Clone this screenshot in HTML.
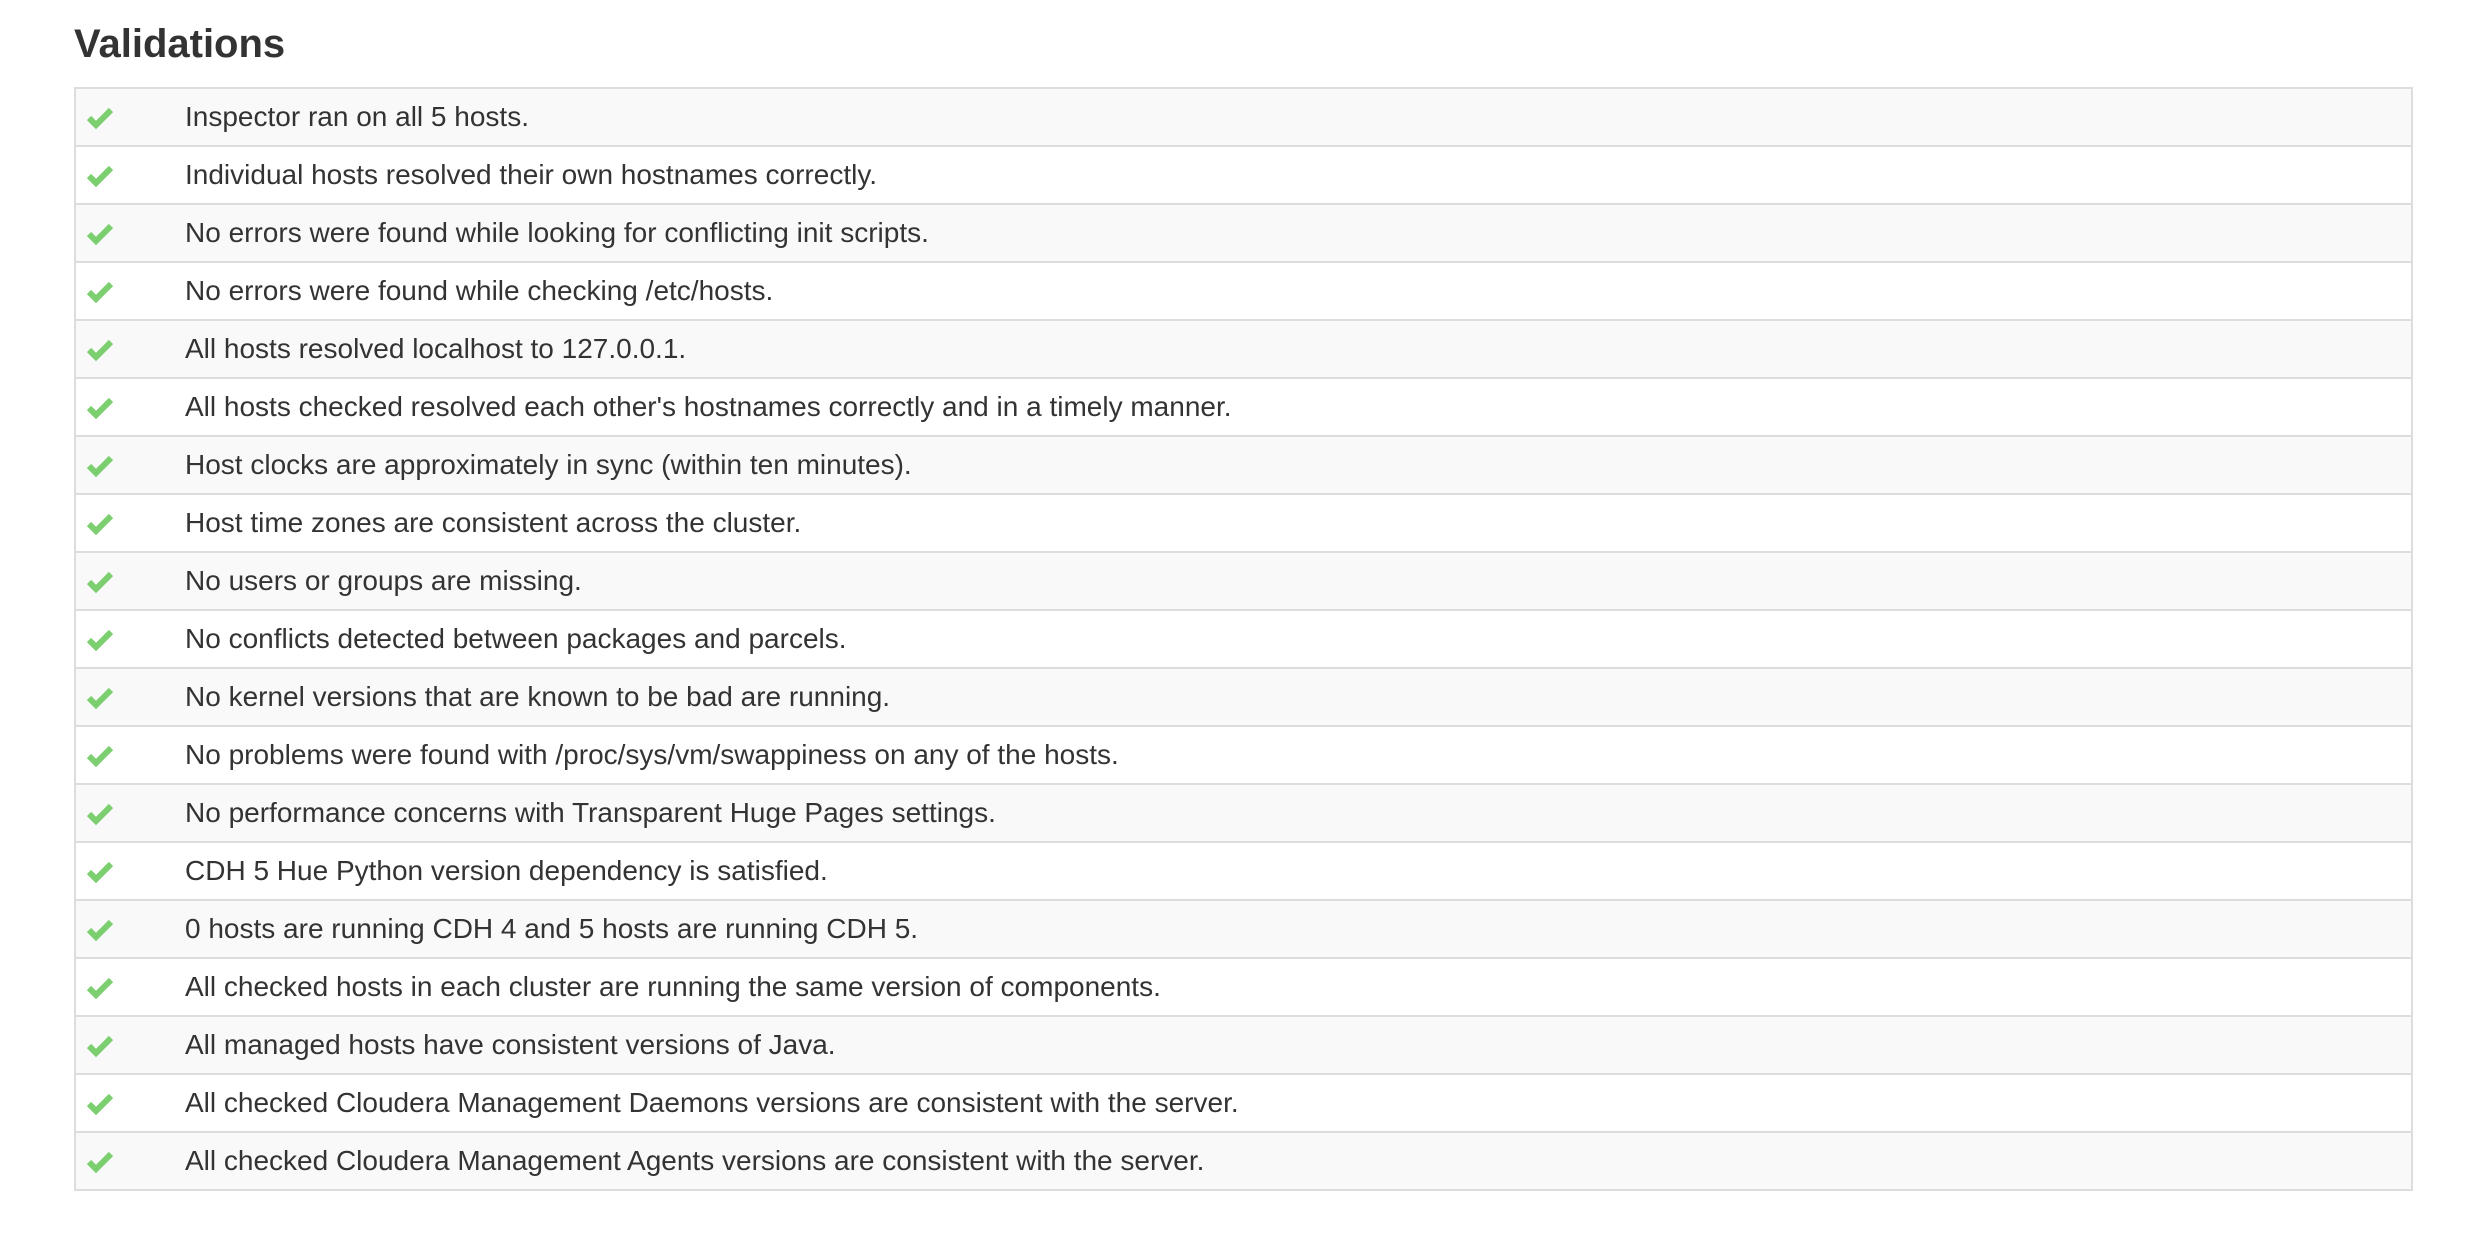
<!DOCTYPE html>
<html><head><style>
body{margin:0;background:#fff;font-family:"Liberation Sans",sans-serif;color:#333;}
h2{position:absolute;left:74px;top:14px;margin:0;font-size:40px;font-weight:bold;line-height:60px;}
table{position:absolute;left:74px;top:87px;width:2339px;border-collapse:collapse;border:2px solid #ddd;}
td{height:56px;border-top:2px solid #ddd;padding:0;font-size:28px;vertical-align:middle;}
tr:nth-child(odd) td{background:#f9f9f9;}
td.i{width:99px;padding-left:10px;}
td.i svg{display:block}
</style></head><body>
<h2>Validations</h2>
<table>
<tr><td class="i"><svg width="28" height="24" viewBox="0 0 28 24"><path d="M3 13 L10 20 L25 5" fill="none" stroke="#7bcf6f" stroke-width="6"/></svg></td><td>Inspector ran on all 5 hosts.</td></tr>
<tr><td class="i"><svg width="28" height="24" viewBox="0 0 28 24"><path d="M3 13 L10 20 L25 5" fill="none" stroke="#7bcf6f" stroke-width="6"/></svg></td><td>Individual hosts resolved their own hostnames correctly.</td></tr>
<tr><td class="i"><svg width="28" height="24" viewBox="0 0 28 24"><path d="M3 13 L10 20 L25 5" fill="none" stroke="#7bcf6f" stroke-width="6"/></svg></td><td>No errors were found while looking for conflicting init scripts.</td></tr>
<tr><td class="i"><svg width="28" height="24" viewBox="0 0 28 24"><path d="M3 13 L10 20 L25 5" fill="none" stroke="#7bcf6f" stroke-width="6"/></svg></td><td>No errors were found while checking /etc/hosts.</td></tr>
<tr><td class="i"><svg width="28" height="24" viewBox="0 0 28 24"><path d="M3 13 L10 20 L25 5" fill="none" stroke="#7bcf6f" stroke-width="6"/></svg></td><td>All hosts resolved localhost to 127.0.0.1.</td></tr>
<tr><td class="i"><svg width="28" height="24" viewBox="0 0 28 24"><path d="M3 13 L10 20 L25 5" fill="none" stroke="#7bcf6f" stroke-width="6"/></svg></td><td>All hosts checked resolved each other's hostnames correctly and in a timely manner.</td></tr>
<tr><td class="i"><svg width="28" height="24" viewBox="0 0 28 24"><path d="M3 13 L10 20 L25 5" fill="none" stroke="#7bcf6f" stroke-width="6"/></svg></td><td>Host clocks are approximately in sync (within ten minutes).</td></tr>
<tr><td class="i"><svg width="28" height="24" viewBox="0 0 28 24"><path d="M3 13 L10 20 L25 5" fill="none" stroke="#7bcf6f" stroke-width="6"/></svg></td><td>Host time zones are consistent across the cluster.</td></tr>
<tr><td class="i"><svg width="28" height="24" viewBox="0 0 28 24"><path d="M3 13 L10 20 L25 5" fill="none" stroke="#7bcf6f" stroke-width="6"/></svg></td><td>No users or groups are missing.</td></tr>
<tr><td class="i"><svg width="28" height="24" viewBox="0 0 28 24"><path d="M3 13 L10 20 L25 5" fill="none" stroke="#7bcf6f" stroke-width="6"/></svg></td><td>No conflicts detected between packages and parcels.</td></tr>
<tr><td class="i"><svg width="28" height="24" viewBox="0 0 28 24"><path d="M3 13 L10 20 L25 5" fill="none" stroke="#7bcf6f" stroke-width="6"/></svg></td><td>No kernel versions that are known to be bad are running.</td></tr>
<tr><td class="i"><svg width="28" height="24" viewBox="0 0 28 24"><path d="M3 13 L10 20 L25 5" fill="none" stroke="#7bcf6f" stroke-width="6"/></svg></td><td>No problems were found with /proc/sys/vm/swappiness on any of the hosts.</td></tr>
<tr><td class="i"><svg width="28" height="24" viewBox="0 0 28 24"><path d="M3 13 L10 20 L25 5" fill="none" stroke="#7bcf6f" stroke-width="6"/></svg></td><td>No performance concerns with Transparent Huge Pages settings.</td></tr>
<tr><td class="i"><svg width="28" height="24" viewBox="0 0 28 24"><path d="M3 13 L10 20 L25 5" fill="none" stroke="#7bcf6f" stroke-width="6"/></svg></td><td>CDH 5 Hue Python version dependency is satisfied.</td></tr>
<tr><td class="i"><svg width="28" height="24" viewBox="0 0 28 24"><path d="M3 13 L10 20 L25 5" fill="none" stroke="#7bcf6f" stroke-width="6"/></svg></td><td>0 hosts are running CDH 4 and 5 hosts are running CDH 5.</td></tr>
<tr><td class="i"><svg width="28" height="24" viewBox="0 0 28 24"><path d="M3 13 L10 20 L25 5" fill="none" stroke="#7bcf6f" stroke-width="6"/></svg></td><td>All checked hosts in each cluster are running the same version of components.</td></tr>
<tr><td class="i"><svg width="28" height="24" viewBox="0 0 28 24"><path d="M3 13 L10 20 L25 5" fill="none" stroke="#7bcf6f" stroke-width="6"/></svg></td><td>All managed hosts have consistent versions of Java.</td></tr>
<tr><td class="i"><svg width="28" height="24" viewBox="0 0 28 24"><path d="M3 13 L10 20 L25 5" fill="none" stroke="#7bcf6f" stroke-width="6"/></svg></td><td>All checked Cloudera Management Daemons versions are consistent with the server.</td></tr>
<tr><td class="i"><svg width="28" height="24" viewBox="0 0 28 24"><path d="M3 13 L10 20 L25 5" fill="none" stroke="#7bcf6f" stroke-width="6"/></svg></td><td>All checked Cloudera Management Agents versions are consistent with the server.</td></tr>
</table>
</body></html>
